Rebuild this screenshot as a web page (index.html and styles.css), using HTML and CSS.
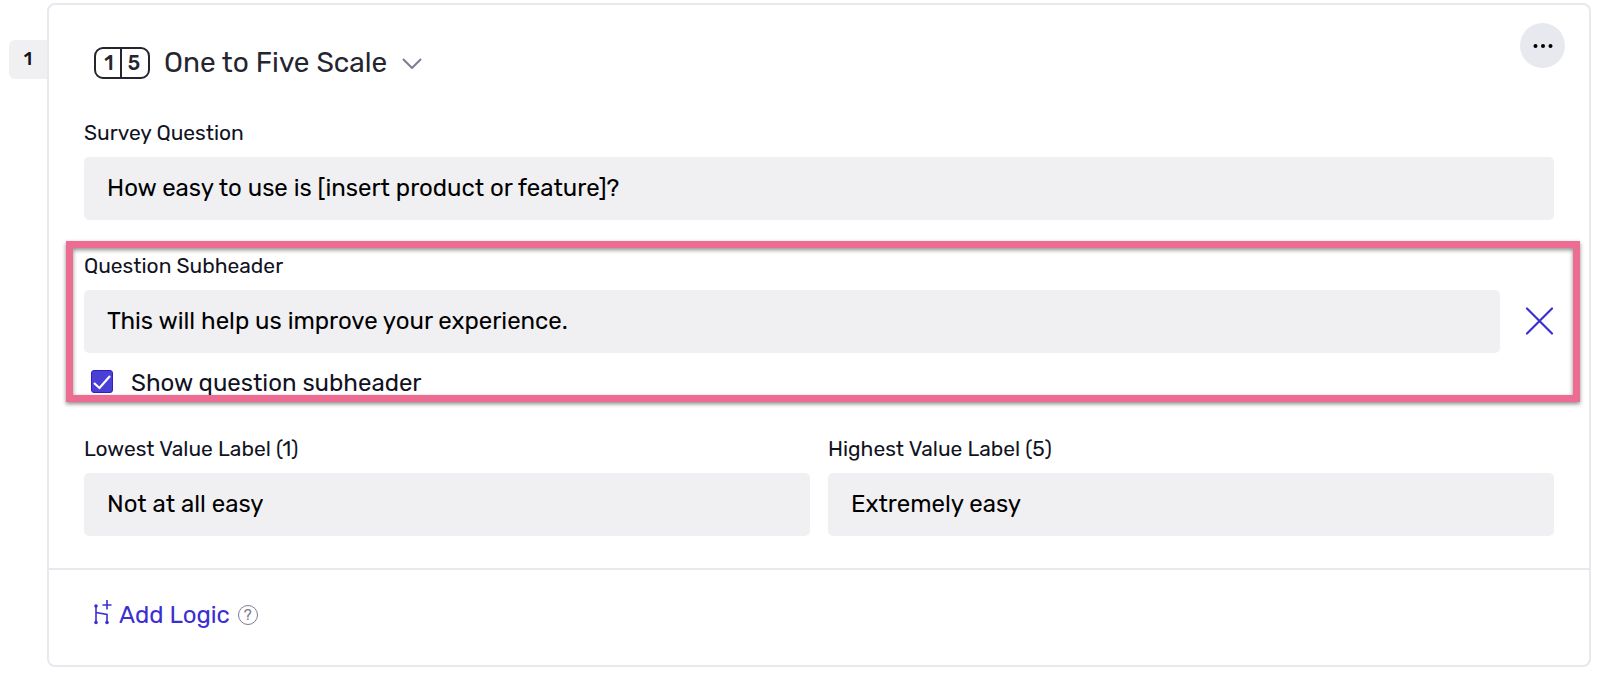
FILE: index.html
```html
<!DOCTYPE html>
<html lang="en">
<head>
    <meta charset="UTF-8">
    <meta name="viewport" content="width=device-width, initial-scale=1.0">
    <title>Survey Question</title>
    <link rel="stylesheet" href="styles.css">
</head>
<body>
    <main class="question">
        <div class="question-number">1</div>

        <form class="card">
            <header class="card-header">
                <div class="type-picker">
                    <svg class="scale-icon" width="56" height="32" viewBox="0 0 56 32" aria-hidden="true">
                        <rect x="1" y="1" width="54" height="30" rx="8" fill="none" stroke="#25252f" stroke-width="2"/>
                        <path d="M27 1V31" stroke="#25252f" stroke-width="2"/>
                        <text x="15" y="23" text-anchor="middle">1</text>
                        <text x="40" y="23" text-anchor="middle">5</text>
                    </svg>
                    <select class="type-select" aria-label="Question type">
                        <option>One to Five Scale</option>
                    </select>
                    <svg width="20" height="12" viewBox="0 0 20 12" aria-hidden="true">
                        <path d="M1 2L10 11L19 2" fill="none" stroke="#7d7d92" stroke-width="2"/>
                    </svg>
                </div>
                <button class="more-button" type="button" aria-label="More options">
                    <svg width="20" height="6" viewBox="0 0 20 6" aria-hidden="true">
                        <circle cx="2.500" cy="3" r="2"/>
                        <circle cx="10" cy="3" r="2"/>
                        <circle cx="17.500" cy="3" r="2"/>
                    </svg>
                </button>
            </header>

            <div class="card-body">
                <div class="field">
                    <label for="surveyQuestion">Survey Question</label>
                    <input type="text" id="surveyQuestion" value="How easy to use is [insert product or feature]?">
                </div>

                <div class="field highlight">
                    <label for="subheader">Question Subheader</label>
                    <div class="input-row">
                        <input type="text" id="subheader" value="This will help us improve your experience.">
                        <button class="remove-button" type="button" aria-label="Remove subheader">
                            <svg width="29" height="29" viewBox="0 0 29 29" aria-hidden="true">
                                <path d="M2 1.5L27 26.500M27 1.5L2 26.500" fill="none" stroke="#3c2fd2" stroke-width="2.2" stroke-linecap="round"/>
                            </svg>
                        </button>
                    </div>
                    <div class="check-row">
                        <input type="checkbox" id="showSubheader" checked>
                        <label for="showSubheader">Show question subheader</label>
                    </div>
                </div>

                <div class="value-labels">
                    <div class="field">
                        <label for="lowestLabel">Lowest Value Label (1)</label>
                        <input type="text" id="lowestLabel" value="Not at all easy">
                    </div>
                    <div class="field">
                        <label for="highestLabel">Highest Value Label (5)</label>
                        <input type="text" id="highestLabel" value="Extremely easy">
                    </div>
                </div>
            </div>

            <footer class="card-footer">
                <button class="logic-button" type="button">
                    <svg width="20" height="30" viewBox="0 0 20 30" aria-hidden="true">
                        <path d="M4 6V22M4 12.5L15 14.5V22M15 0V9.500M10.500 5H19.500" fill="none" stroke="#3c2fd2" stroke-width="1.6"/>
                        <circle cx="4" cy="6" r="1.8" fill="#3c2fd2"/>
                        <circle cx="4" cy="22.5" r="1.8" fill="#3c2fd2"/>
                        <circle cx="15" cy="22.5" r="1.8" fill="#3c2fd2"/>
                    </svg>
                    Add Logic
                </button>
                <button class="help-button" type="button" aria-label="About logic">?</button>
            </footer>
        </form>
    </main>
</body>
</html>
```
FILE: styles.css
```css
* {
    box-sizing: border-box;
}

body {
    margin: 0;
    background-color: #fff;
    color: #11131f;
    font-family: Rubik, Roboto, sans-serif;
}

input,
select,
button {
    font-family: inherit;
}

button {
    padding: 0;
    border: none;
    background: none;
    cursor: pointer;
}

svg {
    display: block;
}

.question {
    display: flex;
    align-items: flex-start;
    padding: 3px 9px;
}

.question-number {
    width: 38px;
    height: 39px;
    margin-top: 37px;
    border-radius: 6px 0 0 6px;
    background-color: #f0f0f3;
    font-size: 18px;
    font-weight: 500;
    line-height: 38px;
    text-align: center;
}

.card {
    flex: 1;
    border: 2px solid #e8e8ef;
    border-radius: 8px;
}

.card-header {
    display: flex;
    justify-content: space-between;
    align-items: flex-start;
    padding: 18px 24px 0 45px;
}

.type-picker {
    display: flex;
    align-items: center;
    gap: 14px;
    margin-top: 24px;
}

.scale-icon text {
    fill: #25252f;
    font-size: 20px;
    font-weight: 500;
}

.type-select {
    appearance: none;
    padding: 0;
    border: none;
    background: none;
    color: #25252f;
    font-size: 28px;
    line-height: 32px;
}

.more-button {
    display: flex;
    align-items: center;
    justify-content: center;
    width: 45px;
    height: 45px;
    border-radius: 50%;
    background-color: #e8e8ef;
}

.card-body {
    padding: 42px 35px 32px;
}

.field {
    display: flex;
    flex-direction: column;
    gap: 12px;
}

.field label {
    font-size: 21px;
    line-height: 24px;
}

.field input[type="text"] {
    width: 100%;
    height: 63px;
    padding: 0 23px 2px;
    border: none;
    border-radius: 5px;
    background-color: #f0f0f3;
    color: #000;
    font-size: 24px;
}

/* Pink frame drawn over the subheader group */
.highlight {
    position: relative;
    margin: 34px 0 41px;
}

.highlight::after {
    content: "";
    position: absolute;
    inset: -13px -26px -6px -18px;
    border: 7px solid #ed6d92;
    box-shadow: 0 2px 4px rgba(0, 0, 0, 0.45), inset 0 2px 4px rgba(0, 0, 0, 0.45);
    pointer-events: none;
}

.input-row {
    display: flex;
    align-items: center;
    gap: 25px;
}

.input-row input {
    flex: 1;
}

.check-row {
    display: flex;
    align-items: flex-start;
    gap: 18px;
    margin-top: 5px;
    padding-left: 7px;
}

.check-row input {
    appearance: none;
    width: 22px;
    height: 23px;
    margin: 0;
    border: 1px solid #2f20c4;
    border-radius: 3px;
}

.check-row input:checked {
    background: #4b40d6 url("data:image/svg+xml,%3Csvg xmlns='http://www.w3.org/2000/svg' viewBox='0 0 20 20'%3E%3Cpath d='M2 11L7.500 16L18 4' fill='none' stroke='white' stroke-width='2.200'/%3E%3C/svg%3E") center / 20px 20px no-repeat;
}

.check-row label {
    font-size: 24px;
    line-height: 26px;
}

.value-labels {
    display: grid;
    grid-template-columns: 1fr 1fr;
    gap: 18px;
}

.card-footer {
    display: flex;
    align-items: center;
    gap: 8px;
    padding: 30px 43px 35px;
    border-top: 2px solid #e8e8ef;
}

.logic-button {
    display: flex;
    align-items: center;
    gap: 7px;
    color: #3c2fd2;
    font-size: 24px;
    line-height: 30px;
}

.help-button {
    width: 20px;
    height: 20px;
    border: 1px solid #7d7d92;
    border-radius: 50%;
    color: #7d7d92;
    font-size: 15px;
    line-height: 18px;
}
```
